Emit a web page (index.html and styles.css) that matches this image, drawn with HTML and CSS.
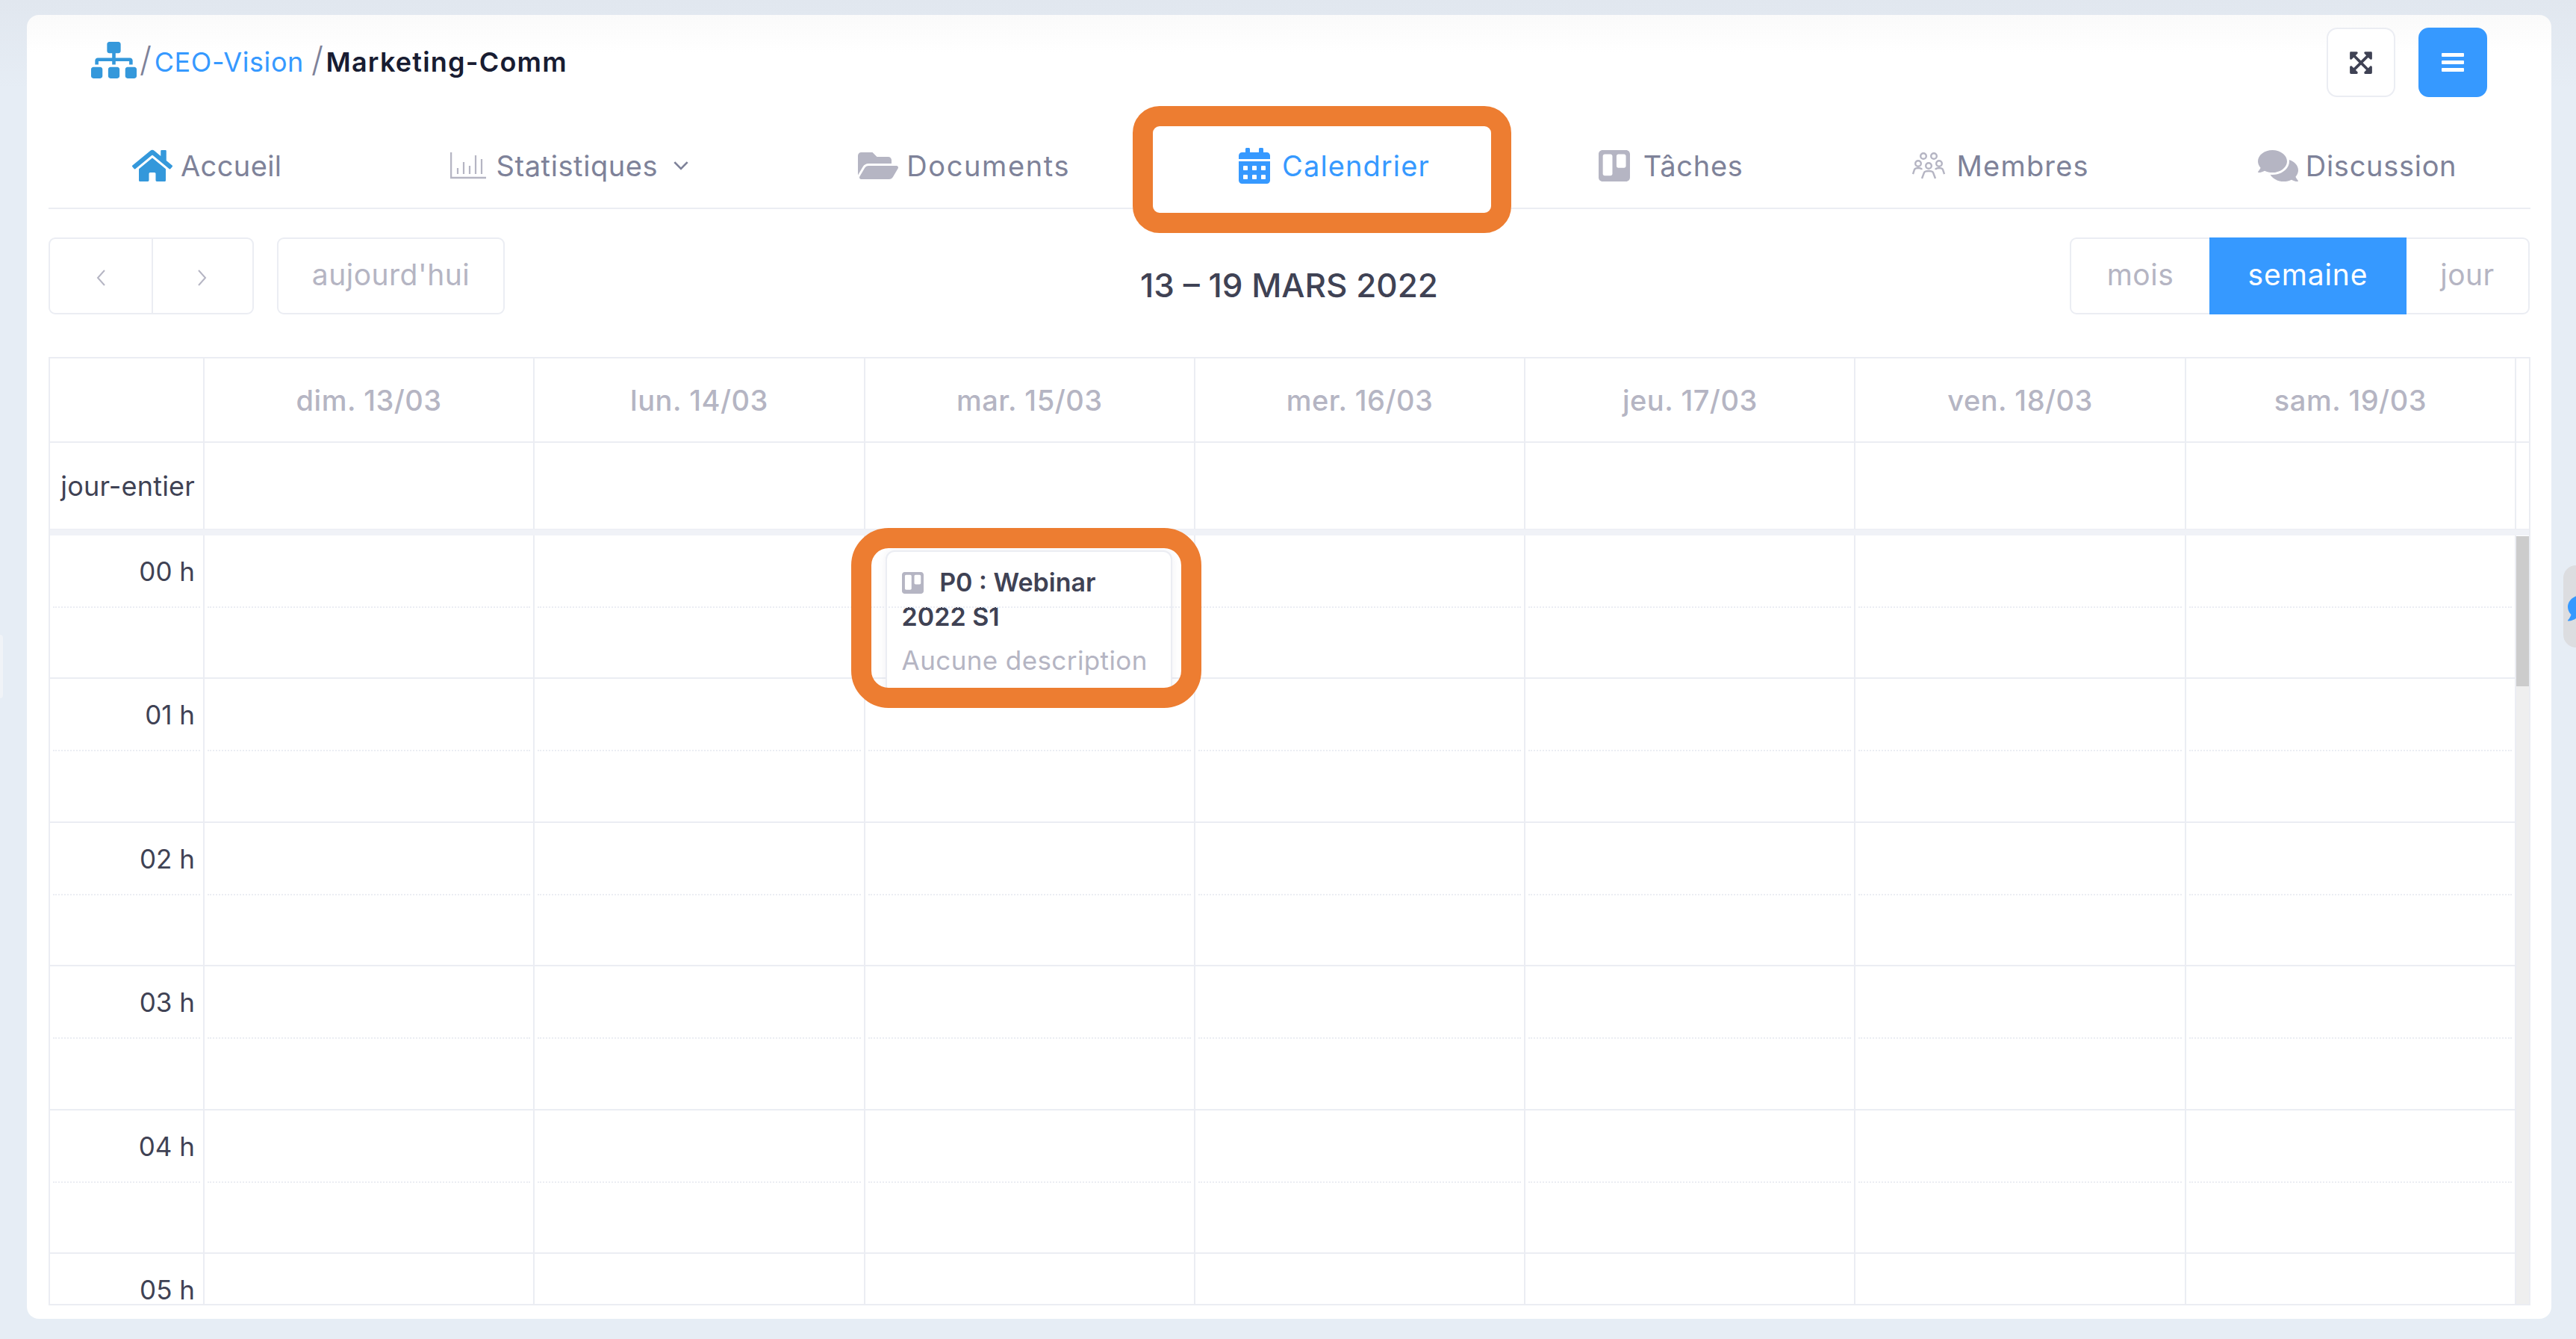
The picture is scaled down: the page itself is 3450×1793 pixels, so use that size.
FILE: index.html
```html
<!DOCTYPE html>
<html lang="fr">
<head>
    <meta charset="UTF-8">
    <meta name="viewport" content="width=device-width, initial-scale=1.0">
    <title>Calendrier - Marketing-Comm</title>
    <link rel="stylesheet" href="styles.css">
</head>
<body>
<div class="side-tab-left"></div>
<div class="chat-tab">
    <svg class="chat-icon" viewBox="0 0 512 512"><path d="M256 32C114.600 32 0 125.100 0 240c0 49.600 21.400 95 57 130.700C44.500 421.100 2.700 466 2.200 466.500c-2.200 2.300-2.800 5.700-1.500 8.700S4.800 480 8 480c66.300 0 116-31.800 140.600-51.400 32.700 12.300 69 19.400 107.400 19.400 141.400 0 256-93.100 256-208S397.400 32 256 32z"/></svg>
</div>

<main class="card">
    <!-- Breadcrumb and actions -->
    <header class="topbar">
        <div class="breadcrumb">
            <svg class="crumb-icon" viewBox="0 0 640 512"><path d="M128 352H32c-17.670 0-32 14.330-32 32v96c0 17.670 14.330 32 32 32h96c17.670 0 32-14.330 32-32v-96c0-17.670-14.330-32-32-32zm-24-80h192v48h48v-48h192v48h48v-57.590c0-21.170-17.230-38.410-38.410-38.410H344v-64h40c17.670 0 32-14.330 32-32V32c0-17.670-14.330-32-32-32H256c-17.670 0-32 14.330-32 32v96c0 17.670 14.330 32 32 32h40v64H94.410C73.230 224 56 241.230 56 262.410V320h48v-48zm264 80h-96c-17.670 0-32 14.330-32 32v96c0 17.670 14.330 32 32 32h96c17.670 0 32-14.330 32-32v-96c0-17.670-14.330-32-32-32zm240 0h-96c-17.670 0-32 14.330-32 32v96c0 17.670 14.330 32 32 32h96c17.670 0 32-14.330 32-32v-96c0-17.670-14.330-32-32-32z"/></svg>
            <span class="crumb-sep">/</span>
            <a class="crumb-link">CEO-Vision</a>
            <span class="crumb-sep crumb-sep-second">/</span>
            <span class="crumb-current">Marketing-Comm</span>
        </div>
        <div class="actions">
            <button class="icon-btn">
                <svg class="expand-icon" viewBox="0 0 448 512"><path d="M448 344v112a23.940 23.940 0 0 1-24 24H312c-21.390 0-32.090-25.900-17-41l36.200-36.200L224 295.600 116.770 402.900 153 439c15.090 15.100 4.390 41-17 41H24a23.940 23.940 0 0 1-24-24V344c0-21.400 25.890-32.100 41-17l36.190 36.200L184.460 256 77.180 148.700 41 184.900c-15.110 15.100-41 4.400-41-17V56a23.940 23.940 0 0 1 24-24h112c21.390 0 32.090 25.900 17 41l-36.200 36.200L224 216.400l107.230-107.300L295 73c-15.090-15.100-4.390-41 17-41h112a23.940 23.940 0 0 1 24 24v112c0 21.400-25.890 32.100-41 17l-36.190-36.200L263.540 256l107.280 107.300L407 327.100c15.110-15.200 41-4.500 41 16.900z"/></svg>
            </button>
            <button class="icon-btn icon-btn-primary">
                <span class="bars"><i></i><i></i><i></i></span>
            </button>
        </div>
    </header>

    <!-- Tabs -->
    <nav class="tabs">
        <a class="tab tab-home">
            <svg class="tab-icon tab-icon-home" viewBox="0 0 576 512"><path d="M280.370 148.260L96 300.110V464a16 16 0 0 0 16 16l112.060-.29a16 16 0 0 0 15.920-16V368a16 16 0 0 1 16-16h64a16 16 0 0 1 16 16v95.640a16 16 0 0 0 16 16.050L464 480a16 16 0 0 0 16-16V300L295.670 148.260a12.190 12.190 0 0 0-15.300 0zM571.600 251.470L488 182.560V44.050a12 12 0 0 0-12-12h-56a12 12 0 0 0-12 12v72.610L318.470 43a48 48 0 0 0-61 0L4.340 251.470a12 12 0 0 0-1.600 16.900l25.500 31A12 12 0 0 0 45.150 301l235.220-193.740a12.190 12.190 0 0 1 15.300 0L530.900 301a12 12 0 0 0 16.900-1.600l25.500-31a12 12 0 0 0-1.700-16.930z"/></svg>
            <span>Accueil</span>
        </a>
        <a class="tab tab-stats">
            <svg class="tab-icon tab-icon-chart" viewBox="0 0 48 36"><path d="M1 0v34h47" fill="none" stroke="currentColor" stroke-width="2.500"/><path d="M10 29V21M18 29V13M26 29V18M34 29V4M42 29V9" fill="none" stroke="currentColor" stroke-width="2.200"/></svg>
            <span>Statistiques</span>
            <svg class="chevron" viewBox="0 0 20 12"><path d="M2 2l8 8 8-8" fill="none" stroke="currentColor" stroke-width="2.500"/></svg>
        </a>
        <a class="tab tab-docs">
            <svg class="tab-icon tab-icon-folder" viewBox="0 0 576 512"><path d="M572.694 292.093L500.270 416.248A63.997 63.997 0 0 1 444.989 448H45.025c-18.523 0-30.064-20.093-20.731-36.093l72.424-124.155A64 64 0 0 1 152 256h399.964c18.523 0 30.064 20.093 20.730 36.093zM152 224h328v-48c0-26.510-21.490-48-48-48H272l-64-64H48C21.490 64 0 85.490 0 112v278.046l69.077-118.418C86.214 242.250 117.989 224 152 224z"/></svg>
            <span>Documents</span>
        </a>
        <a class="tab tab-active">
            <svg class="tab-icon tab-icon-calendar" viewBox="0 0 448 512"><path d="M0 464c0 26.500 21.500 48 48 48h352c26.500 0 48-21.500 48-48V192H0v272zm320-196c0-6.600 5.400-12 12-12h40c6.600 0 12 5.400 12 12v40c0 6.600-5.400 12-12 12h-40c-6.600 0-12-5.400-12-12v-40zm0 128c0-6.600 5.400-12 12-12h40c6.600 0 12 5.400 12 12v40c0 6.600-5.400 12-12 12h-40c-6.600 0-12-5.400-12-12v-40zM192 268c0-6.600 5.400-12 12-12h40c6.600 0 12 5.400 12 12v40c0 6.600-5.400 12-12 12h-40c-6.600 0-12-5.400-12-12v-40zm0 128c0-6.600 5.400-12 12-12h40c6.600 0 12 5.400 12 12v40c0 6.600-5.400 12-12 12h-40c-6.600 0-12-5.400-12-12v-40zM64 268c0-6.600 5.400-12 12-12h40c6.600 0 12 5.400 12 12v40c0 6.600-5.400 12-12 12H76c-6.600 0-12-5.400-12-12v-40zm0 128c0-6.600 5.400-12 12-12h40c6.600 0 12 5.400 12 12v40c0 6.600-5.400 12-12 12H76c-6.600 0-12-5.400-12-12v-40zM400 64h-48V16c0-8.800-7.200-16-16-16h-32c-8.800 0-16 7.200-16 16v48H160V16c0-8.800-7.200-16-16-16h-32c-8.800 0-16 7.200-16 16v48H48C21.500 64 0 85.500 0 112v48h448v-48c0-26.500-21.500-48-48-48z"/></svg>
            <span>Calendrier</span>
        </a>
        <a class="tab">
            <svg class="tab-icon tab-icon-board" viewBox="0 0 448 512"><path d="M392.300 32H56.100C25.100 32 0 57.100 0 88c-.1 0 0-4 0 336 0 30.900 25.100 56 56 56h336.200c30.800-.2 55.700-25.200 55.700-56V88c.1-30.800-24.800-55.800-55.600-56zM197 371.300c-.2 14.700-12.100 26.600-26.900 26.600H87.400c-14.800.1-26.900-11.800-27-26.600V117.100c0-14.800 12-26.900 26.900-26.900h82.900c14.800 0 26.900 12 26.900 26.900v254.200zm193.100-112c0 14.800-12 26.900-26.900 26.900h-81c-14.800 0-26.900-12-26.900-26.900V117.200c0-14.800 12-26.900 26.800-26.900h81.100c14.800 0 26.900 12 26.900 26.900v142.100z"/></svg>
            <span>Tâches</span>
        </a>
        <a class="tab tab-members">
            <svg class="tab-icon tab-icon-users" viewBox="0 0 44 36" fill="none" stroke="currentColor" stroke-width="2.400"><circle cx="15" cy="5" r="3.800"/><circle cx="29" cy="5" r="3.800"/><circle cx="8" cy="15" r="3.800"/><circle cx="36" cy="15" r="3.800"/><circle cx="22" cy="18" r="3.800"/><path d="M1 29l2-6q1-2 5-2t5 2M43 29l-2-6q-1-2-5-2t-5 2M13 35l3-8q1-2 6-2t6 2l3 8"/></svg>
            <span>Membres</span>
        </a>
        <a class="tab">
            <svg class="tab-icon tab-icon-comments" viewBox="0 0 576 512"><path d="M416 192c0-88.400-93.100-160-208-160S0 103.600 0 192c0 34.300 14.100 65.900 38 92-13.400 30.200-35.500 54.200-35.800 54.500-2.200 2.300-2.800 5.700-1.500 8.700S4.800 352 8 352c36.600 0 66.900-12.300 88.700-25 32.200 15.700 70.300 25 111.300 25 114.900 0 208-71.600 208-160zm122 220c23.900-26 38-57.700 38-92 0-66.900-53.500-124.200-129.300-148.100.9 6.600 1.300 13.300 1.300 20.100 0 105.900-107.700 192-240 192-10.800 0-21.300-.8-31.700-1.900C207.800 439.600 281.800 480 368 480c41 0 79.100-9.200 111.300-25 21.800 12.700 52.100 25 88.700 25 3.200 0 6.100-1.900 7.300-4.800 1.300-2.900.7-6.300-1.500-8.700-.3-.3-22.400-24.200-35.800-54.500z"/></svg>
            <span>Discussion</span>
        </a>
    </nav>

    <!-- Calendar toolbar -->
    <div class="toolbar">
        <div class="toolbar-left">
            <div class="btn-group">
                <button class="cal-btn cal-btn-arrow"><svg class="arrow" viewBox="0 0 14 24"><path d="M12 2L3 12l9 10" fill="none" stroke="currentColor" stroke-width="2"/></svg></button>
                <button class="cal-btn cal-btn-arrow"><svg class="arrow" viewBox="0 0 14 24"><path d="M2 2l9 10-9 10" fill="none" stroke="currentColor" stroke-width="2"/></svg></button>
            </div>
            <div class="btn-group"><button class="cal-btn cal-btn-today">aujourd'hui</button></div>
        </div>
        <h2 class="cal-title">13 – 19 MARS 2022</h2>
        <div class="btn-group toolbar-right">
            <button class="cal-btn cal-btn-month">mois</button>
            <button class="cal-btn cal-btn-week is-on">semaine</button>
            <button class="cal-btn cal-btn-day">jour</button>
        </div>
    </div>

    <!-- Week view -->
    <section class="calendar">
        <div class="week-row head-row">
            <div class="cell"></div>
            <div class="cell day-name">dim. 13/03</div>
            <div class="cell day-name">lun. 14/03</div>
            <div class="cell day-name">mar. 15/03</div>
            <div class="cell day-name">mer. 16/03</div>
            <div class="cell day-name">jeu. 17/03</div>
            <div class="cell day-name">ven. 18/03</div>
            <div class="cell day-name">sam. 19/03</div>
            <div class="gutter"></div>
        </div>
        <div class="week-row allday-row">
            <div class="cell allday-label">jour-entier</div>
            <div class="cell"></div><div class="cell"></div><div class="cell"></div><div class="cell"></div>
            <div class="cell"></div><div class="cell"></div><div class="cell"></div>
            <div class="gutter"></div>
        </div>
        <div class="divider"></div>
        <div class="time-area">
            <div class="time-grid">
                <div class="week-row time-row">
                    <div class="cell hour">00 h</div>
                    <div class="cell"></div><div class="cell"></div>
                    <div class="cell event-cell">
                        <article class="event">
                            <h4 class="event-title">
                                <svg class="event-icon" viewBox="0 32 448 448"><path d="M392.300 32H56.100C25.100 32 0 57.100 0 88c-.1 0 0-4 0 336 0 30.900 25.100 56 56 56h336.200c30.800-.2 55.700-25.200 55.700-56V88c.1-30.800-24.800-55.800-55.600-56zM197 371.300c-.2 14.700-12.100 26.600-26.900 26.600H87.400c-14.800.1-26.900-11.800-27-26.600V117.100c0-14.800 12-26.900 26.900-26.900h82.900c14.800 0 26.900 12 26.900 26.900v254.200zm193.100-112c0 14.800-12 26.900-26.900 26.900h-81c-14.800 0-26.900-12-26.900-26.900V117.200c0-14.800 12-26.900 26.800-26.900h81.100c14.800 0 26.900 12 26.900 26.900v142.100z"/></svg>
                                P0 : Webinar 2022 S1
                            </h4>
                            <p class="event-desc">Aucune description</p>
                        </article>
                        <div class="event-frame"></div>
                    </div>
                    <div class="cell"></div><div class="cell"></div><div class="cell"></div><div class="cell"></div>
                </div>
                <div class="week-row time-row">
                    <div class="cell hour">01 h</div>
                    <div class="cell"></div><div class="cell"></div><div class="cell"></div><div class="cell"></div>
                    <div class="cell"></div><div class="cell"></div><div class="cell"></div>
                </div>
                <div class="week-row time-row">
                    <div class="cell hour">02 h</div>
                    <div class="cell"></div><div class="cell"></div><div class="cell"></div><div class="cell"></div>
                    <div class="cell"></div><div class="cell"></div><div class="cell"></div>
                </div>
                <div class="week-row time-row">
                    <div class="cell hour">03 h</div>
                    <div class="cell"></div><div class="cell"></div><div class="cell"></div><div class="cell"></div>
                    <div class="cell"></div><div class="cell"></div><div class="cell"></div>
                </div>
                <div class="week-row time-row">
                    <div class="cell hour">04 h</div>
                    <div class="cell"></div><div class="cell"></div><div class="cell"></div><div class="cell"></div>
                    <div class="cell"></div><div class="cell"></div><div class="cell"></div>
                </div>
                <div class="week-row time-row">
                    <div class="cell hour">05 h</div>
                    <div class="cell"></div><div class="cell"></div><div class="cell"></div><div class="cell"></div>
                    <div class="cell"></div><div class="cell"></div><div class="cell"></div>
                </div>
            </div>
            <div class="scrollbar"><div class="scroll-thumb"></div></div>
        </div>
    </section>
</main>
</body>
</html>
```

FILE: styles.css
```css
* {
    box-sizing: border-box;
}

html, body {
    height: 100%;
}

body {
    margin: 0;
    height: 1793px;
    padding: 20px 33px 27px 36px;
    overflow: hidden;
    font-family: Inter, "Open Sans", sans-serif;
    color: #3f4254;
    background-color: #e6edf5;
    background-image: linear-gradient(#e1e7ef, #e6edf5 120px);
}

button {
    font-family: inherit;
}

.side-tab-left {
    position: fixed;
    left: 0;
    top: 850px;
    width: 4px;
    height: 85px;
    background-color: #f0f3f7;
    border-radius: 0 4px 4px 0;
}

.chat-tab {
    position: fixed;
    right: 0;
    top: 757px;
    width: 17px;
    height: 110px;
    overflow: hidden;
    background-color: #dcdde0;
    border-radius: 17px 0 0 17px;
}

.chat-icon {
    position: absolute;
    left: 6px;
    top: 37px;
    width: 40px;
    height: 40px;
    fill: #3699ff;
}

.card {
    display: flex;
    flex-direction: column;
    height: 100%;
    padding-top: 17px;
    padding-bottom: 18px;
    background-color: #ffffff;
    background-image: linear-gradient(#fafafa, #ffffff 50px);
    background-repeat: no-repeat;
    border-radius: 16px;
}

/* top bar */
.topbar {
    display: flex;
    justify-content: space-between;
    align-items: flex-start;
    height: 94px;
    padding: 0 86px 0 86px;
}

.breadcrumb {
    display: flex;
    align-items: center;
    height: 92px;
    font-size: 36px;
    letter-spacing: 0.6px;
}

.crumb-icon {
    width: 61px;
    height: 49px;
    margin-top: -6px;
    fill: #3498db;
}

.crumb-sep {
    margin: -8px 3px 0 4px;
    font-size: 46px;
    font-weight: 300;
    color: #7e8299;
}

.crumb-sep-second {
    margin-left: 10px;
}

.crumb-link {
    color: #3699ff;
}

.crumb-current {
    font-weight: 600;
    letter-spacing: 1.2px;
    color: #181c32;
}

.actions {
    display: flex;
    gap: 31px;
}

.icon-btn {
    display: flex;
    align-items: center;
    justify-content: center;
    width: 92px;
    height: 93px;
    padding: 0;
    background-color: #ffffff;
    border: 2px solid #ebedf3;
    border-radius: 14px;
}

.icon-btn-primary {
    background-color: #3699ff;
    border-color: #3699ff;
}

.expand-icon {
    width: 30px;
    height: 34px;
    fill: #3f4254;
}

.bars {
    display: flex;
    flex-direction: column;
    gap: 5px;
    width: 30px;
}

.bars i {
    display: block;
    height: 5px;
    background-color: #ffffff;
    border-radius: 1px;
}

/* tabs */
.tabs {
    display: flex;
    align-items: center;
    gap: 226px;
    height: 149px;
    margin: 0 28px 0 29px;
    padding: 34px 0 0 112px;
    border-bottom: 2px solid #ebedf3;
}

.tab {
    position: relative;
    display: flex;
    align-items: center;
    height: 58px;
    font-size: 38px;
    letter-spacing: 0.7px;
    color: #7e8299;
}

.tab span {
    position: relative;
    z-index: 1;
}

.tab-home {
    letter-spacing: 0.4px;
}

.tab-stats {
    letter-spacing: 0.6px;
}

.tab-docs {
    letter-spacing: 1.6px;
}

.tab-members {
    letter-spacing: 1.2px;
}

.tab-icon {
    position: relative;
    z-index: 1;
    fill: #b5b5c3;
    color: #b5b5c3;
}

.tab-icon-home {
    width: 54px;
    height: 48px;
    margin-right: 11px;
    fill: #3498db;
}

.tab-icon-chart {
    width: 48px;
    height: 36px;
    margin-right: 13px;
}

.tab-icon-folder {
    width: 54px;
    height: 48px;
    margin-right: 11px;
}

.tab-icon-calendar {
    width: 42px;
    height: 48px;
    margin-right: 16px;
    fill: #3699ff;
}

.tab-icon-board {
    width: 42px;
    height: 48px;
    margin-right: 18px;
}

.tab-icon-users {
    width: 44px;
    height: 36px;
    margin-right: 16px;
    fill: none;
}

.tab-icon-comments {
    width: 54px;
    height: 48px;
    margin-right: 10px;
}

.chevron {
    width: 22px;
    height: 13px;
    margin-left: 20px;
    color: #7e8299;
}

.tab-active {
    letter-spacing: 1.1px;
    color: #3699ff;
}

/* orange highlight drawn over the tab bar */
.tab-active::before {
    content: "";
    position: absolute;
    left: -142px;
    right: -109px;
    top: -51px;
    bottom: -61px;
    background-color: #ffffff;
    border: 27px solid #ed7d31;
    border-radius: 36px;
}

/* toolbar */
.toolbar {
    display: flex;
    justify-content: space-between;
    align-items: center;
    height: 103px;
    margin: 38px 29px 57px;
    position: relative;
}

.toolbar-left {
    display: flex;
    gap: 31px;
}

.btn-group {
    display: flex;
    height: 103px;
    background-color: #ffffff;
    border: 2px solid #ebedf3;
    border-radius: 9px;
}

.cal-btn {
    height: 100%;
    padding: 0 0 4px;
    font-size: 39px;
    letter-spacing: 0.5px;
    color: #b5b5c3;
    background: none;
    border: 0;
}

.cal-btn-arrow {
    width: 135.5px;
    padding: 0;
}

.cal-btn-arrow + .cal-btn-arrow {
    border-left: 2px solid #ebedf3;
}

.arrow {
    width: 14px;
    height: 24px;
    margin-top: 6px;
}

.cal-btn-today {
    width: 301px;
}

.cal-btn-month {
    width: 185px;
}

.cal-btn-week {
    width: 264px;
    height: calc(100% + 4px);
    margin-top: -2px;
    letter-spacing: 0.9px;
}

.cal-btn-day {
    width: 163px;
}

.is-on {
    color: #ffffff;
    background-color: #3699ff;
}

.cal-title {
    position: absolute;
    left: 0;
    right: 0;
    top: 30px;
    margin: 0;
    font-size: 44px;
    font-weight: 500;
    line-height: 68px;
    text-align: center;
    color: #3f4254;
}

/* week view */
.calendar {
    flex: 1;
    min-height: 0;
    margin: 0 28px 0 29px;
    overflow: hidden;
    border: 2px solid #ebedf3;
}

.week-row {
    display: grid;
    grid-template-columns: 207px repeat(7, 442.3px) 1fr;
}

.cell {
    position: relative;
    border-right: 2px solid #ebedf3;
}

.head-row {
    height: 113px;
    border-bottom: 2px solid #ebedf3;
}

.day-name {
    display: flex;
    align-items: center;
    justify-content: center;
    font-size: 38px;
    font-weight: 500;
    letter-spacing: 0.5px;
    color: #b5b5c3;
}

.allday-row {
    height: 115px;
}

.allday-label {
    display: flex;
    align-items: center;
    justify-content: flex-end;
    padding-right: 11px;
    font-size: 36px;
    letter-spacing: 0.2px;
    color: #3f4254;
}

.divider {
    height: 9px;
    background-color: #f0f2f7;
    border-top: 1px solid #ebedf3;
}

.time-area {
    display: flex;
    align-items: flex-start;
}

.time-grid {
    width: 3303px;
}

.time-row {
    height: 192.4px;
    grid-template-columns: 207px repeat(7, 442.3px);
    border-bottom: 2px solid #ebedf3;
}

.time-row .cell::after {
    content: "";
    position: absolute;
    left: 4px;
    right: 4px;
    top: 95px;
    border-top: 2px dotted #ebedf3;
}

.hour {
    padding: 31px 11px 0 0;
    font-size: 35px;
    line-height: 34px;
    text-align: right;
}

.scrollbar {
    flex: 1;
    height: 1200px;
    margin-top: 1px;
    background-color: #efefef;
}

.scroll-thumb {
    height: 201px;
    background-color: #cccccc;
}

/* event with its orange highlight */
.event-cell {
    z-index: 2;
}

.event {
    position: absolute;
    left: 27px;
    top: 20px;
    width: 384px;
    height: 195px;
    padding: 18px 16px 0 20px;
    background-color: #ffffff;
    border: 2px solid #ebedf3;
    border-radius: 12px;
    box-shadow: 0 0 12px rgba(180, 180, 200, 0.2);
}

.event-title {
    margin: 0;
    font-size: 34px;
    font-weight: 600;
    line-height: 46px;
    color: #3f4254;
}

.event-icon {
    width: 29px;
    height: 29px;
    margin-right: 13px;
    vertical-align: -3px;
    fill: #b5b5c3;
}

.event-desc {
    margin: 12px 0 0;
    font-size: 35px;
    letter-spacing: 0.4px;
    line-height: 46px;
    white-space: nowrap;
    color: #b5b5c3;
}

.event-frame {
    position: absolute;
    left: -19px;
    top: -10px;
    width: 469px;
    height: 241px;
    border: 27px solid #ed7d31;
    border-radius: 50px;
    z-index: 3;
}
```
